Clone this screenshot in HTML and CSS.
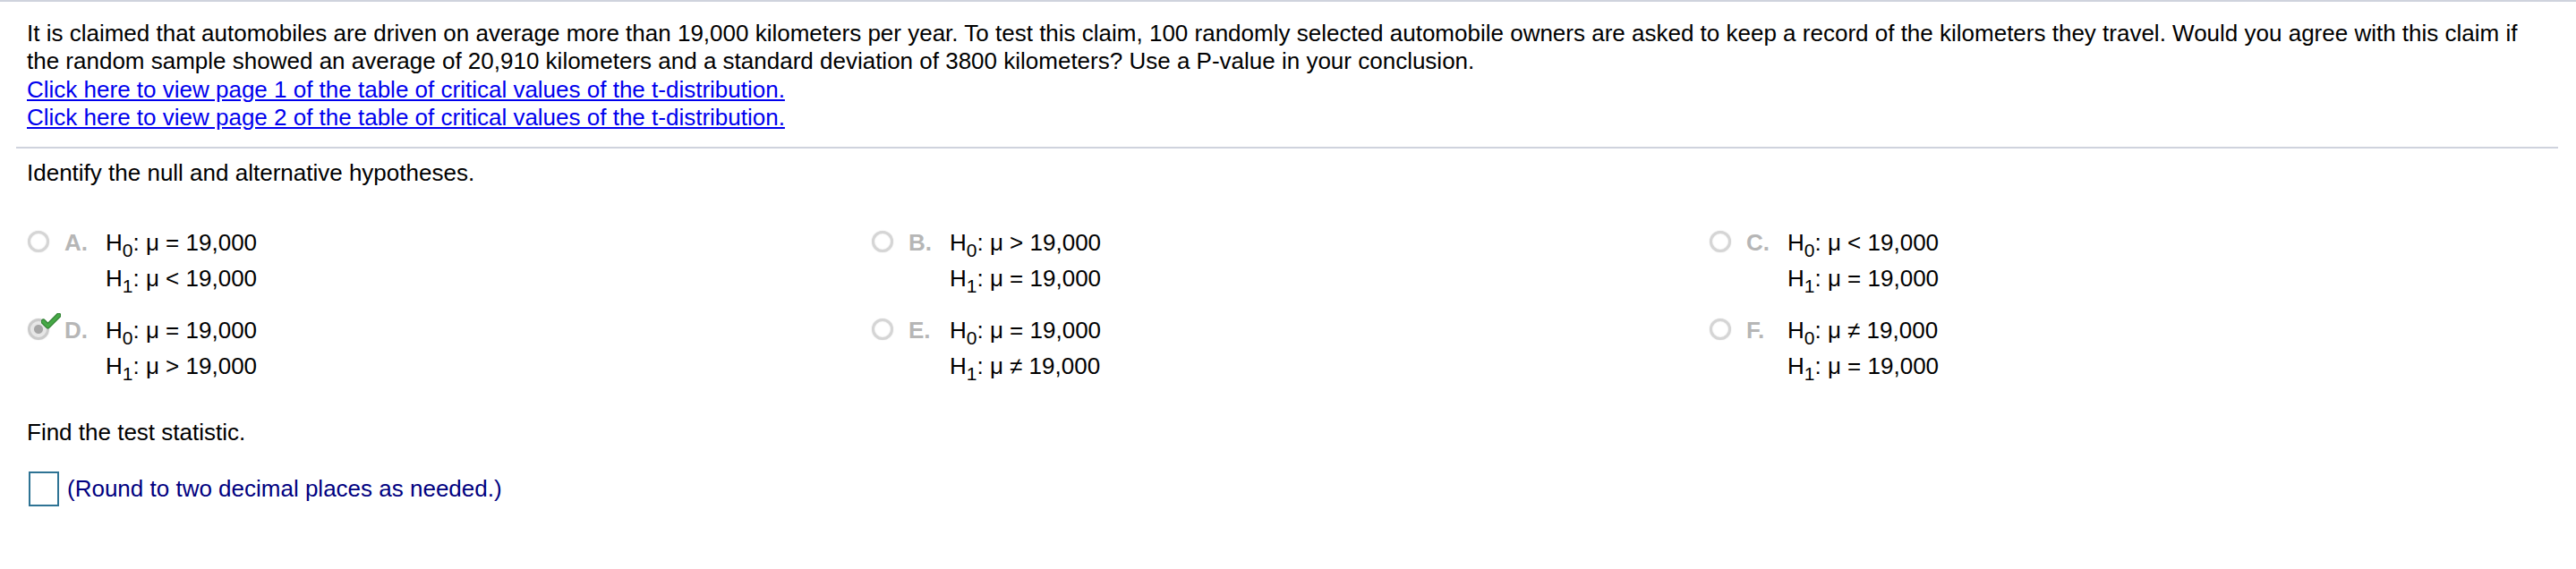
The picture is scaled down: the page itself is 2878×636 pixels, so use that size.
FILE: index.html
```html
<!DOCTYPE html>
<html>
<head>
<meta charset="utf-8">
<link rel="stylesheet" href="styles.css">
</head>
<body>
<div class="topbar"></div>
<div class="question">
  <p class="stem">It is claimed that automobiles are driven on average more than 19,000 kilometers per year. To test this claim, 100 randomly selected automobile owners are asked to keep a record of the kilometers they travel. Would you agree with this claim if the random sample showed an average of 20,910 kilometers and a standard deviation of 3800 kilometers? Use a P-value in your conclusion.<br><a class="link" href="#">Click here to view page 1 of the table of critical values of the t-distribution.</a><br><a class="link" href="#">Click here to view page 2 of the table of critical values of the t-distribution.</a></p>
</div>
<div class="sep"></div>
<div class="part">
  <p class="prompt">Identify the null and alternative hypotheses.</p>
  <div class="choices">
    <div class="choice">
      <span class="radio"></span><span class="letter">A.</span>
      <div class="hyp"><div class="eq">H<sub>0</sub>: μ = 19,000</div><div class="eq">H<sub>1</sub>: μ &lt; 19,000</div></div>
    </div>
    <div class="choice">
      <span class="radio"></span><span class="letter">B.</span>
      <div class="hyp"><div class="eq">H<sub>0</sub>: μ &gt; 19,000</div><div class="eq">H<sub>1</sub>: μ = 19,000</div></div>
    </div>
    <div class="choice">
      <span class="radio"></span><span class="letter">C.</span>
      <div class="hyp"><div class="eq">H<sub>0</sub>: μ &lt; 19,000</div><div class="eq">H<sub>1</sub>: μ = 19,000</div></div>
    </div>
    <div class="choice">
      <span class="radio selected"><svg class="check" viewBox="0 0 22 18" width="22" height="18"><path d="M2.5 9.5 L7.5 14.5 L19.5 2.5" fill="none" stroke="#2f7f31" stroke-width="6" stroke-linecap="round" stroke-linejoin="round"/><path d="M2.5 9.5 L7.5 14.5 L19.5 2.5" fill="none" stroke="#46a846" stroke-width="3.6" stroke-linecap="round" stroke-linejoin="round"/></svg></span><span class="letter">D.</span>
      <div class="hyp"><div class="eq">H<sub>0</sub>: μ = 19,000</div><div class="eq">H<sub>1</sub>: μ &gt; 19,000</div></div>
    </div>
    <div class="choice">
      <span class="radio"></span><span class="letter">E.</span>
      <div class="hyp"><div class="eq">H<sub>0</sub>: μ = 19,000</div><div class="eq">H<sub>1</sub>: μ ≠ 19,000</div></div>
    </div>
    <div class="choice">
      <span class="radio"></span><span class="letter">F.</span>
      <div class="hyp"><div class="eq">H<sub>0</sub>: μ ≠ 19,000</div><div class="eq">H<sub>1</sub>: μ = 19,000</div></div>
    </div>
  </div>
  <p class="prompt find">Find the test statistic.</p>
  <div class="answer"><span class="input"></span><span class="hint">(Round to two decimal places as needed.)</span></div>
</div>
</body>
</html>
```
FILE: styles.css
```css
html, body {
  margin: 0;
  padding: 0;
  background: #ffffff;
}
body {
  font-family: "Liberation Sans", Arial, Helvetica, sans-serif;
  font-size: 26px;
  color: #000000;
}
.topbar {
  height: 2px;
  background: #cfd3dd;
}
.question {
  padding: 19.5px 35px 0 30px;
}
.stem {
  margin: 0;
  line-height: 31.5px;
}
.link {
  color: #0000ee;
  text-decoration: underline;
}
.sep {
  height: 2px;
  background: #cfd3dd;
  margin: 16px 0 0 18px;
  width: 2840px;
}
.part {
  padding-left: 30px;
}
.prompt {
  margin: 12px 0 0 0;
  line-height: 31.5px;
}
.choices {
  display: grid;
  grid-template-columns: 943px 936px 1fr;
  row-gap: 18px;
  margin-top: 42px;
  padding-left: 1px;
}
.choice {
  display: flex;
  align-items: flex-start;
  line-height: 40px;
}
.radio {
  position: relative;
  flex: none;
  box-sizing: border-box;
  width: 24px;
  height: 24px;
  margin-top: 7px;
  border: 3px solid #d5d5d5;
  border-radius: 50%;
  background: #ffffff;
  box-shadow: 0 0 1.5px #dedede, inset 0 0 1.5px #e2e2e2;
}
.radio.selected {
  border-color: #cbcbcb;
  background: radial-gradient(circle at 50% 50%, #a6a6a6 0, #a6a6a6 4.5px, #e4e4e4 5.5px, #f2f2f2 100%);
}
.check {
  position: absolute;
  left: 12px;
  top: -9px;
}
.letter {
  flex: none;
  width: 46px;
  margin-left: 17px;
  color: #b6b6b6;
  font-weight: bold;
}
.eq sub {
  font-size: 21px;
  line-height: 0;
  vertical-align: -7px;
}
.find {
  margin-top: 38.5px;
}
.answer {
  display: flex;
  align-items: center;
  margin-top: 28px;
}
.input {
  flex: none;
  box-sizing: border-box;
  width: 34px;
  height: 39px;
  margin-left: 2px;
  border: 2px solid #2e7394;
  background: #ffffff;
}
.hint {
  margin-left: 9px;
  line-height: 31.5px;
  color: #000080;
}
```
